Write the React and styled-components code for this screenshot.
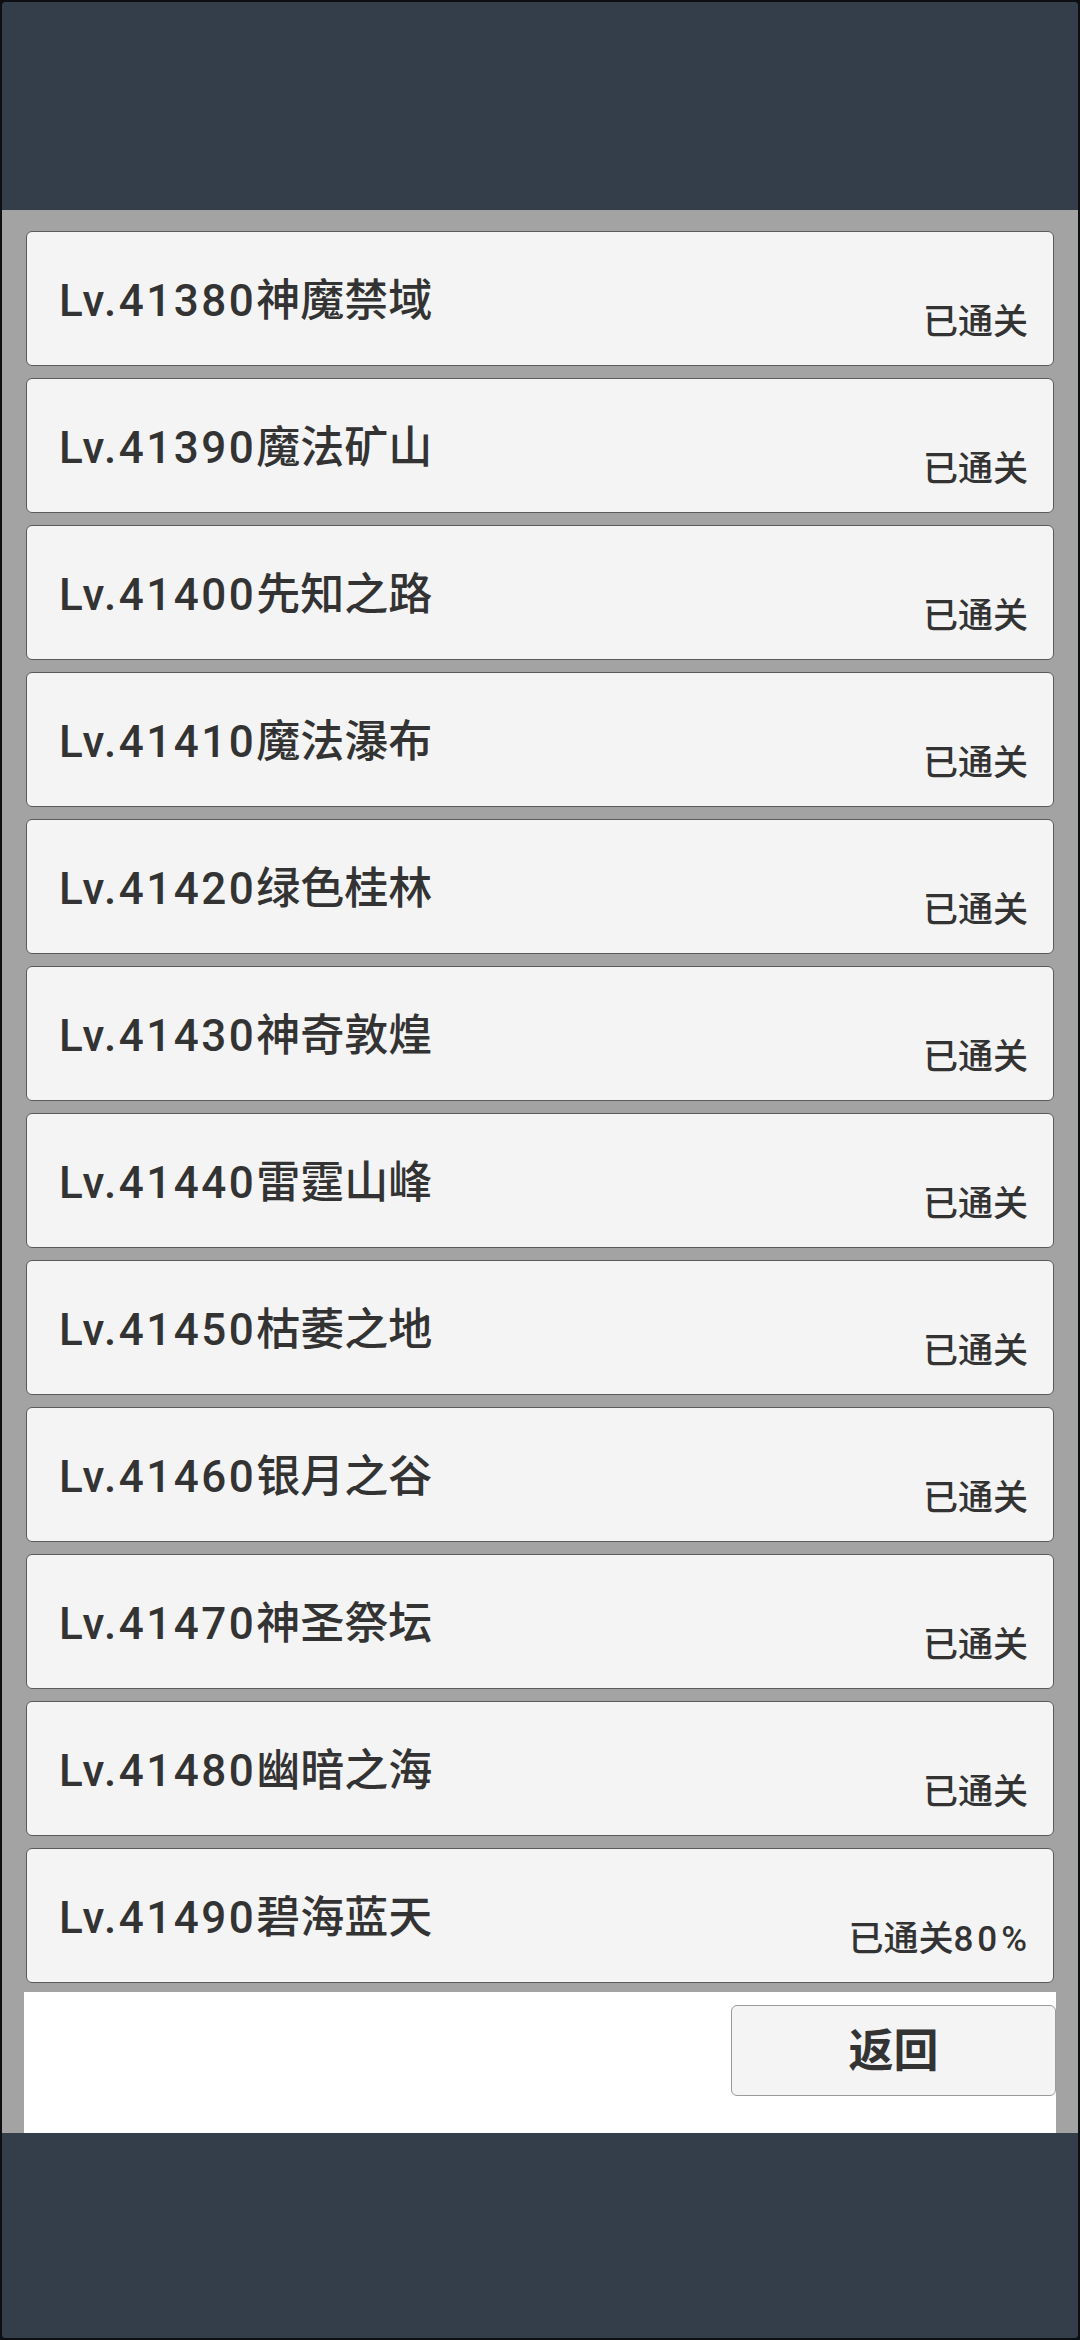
import styled, { createGlobalStyle } from 'styled-components'

const GlobalStyle = createGlobalStyle`
  html, body {
    margin: 0;
    padding: 0;
    background: #0e0f12;
  }
  * {
    box-sizing: border-box;
  }
`

const Screen = styled.div`
  width: 1080px;
  height: 2340px;
  display: flex;
  flex-direction: column;
  border: 2px solid #0e0f12;
  border-radius: 6px;
  overflow: hidden;
  background: #343d4a;
  font-family: Roboto, "Noto Sans CJK SC", sans-serif;
  color: #333333;
`

const TopBar = styled.div`
  height: 208px;
  flex-shrink: 0;
  background: #343d4a;
`

const Panel = styled.div`
  background: #a3a3a3;
  padding: 21px 24px 0 24px;
  display: flex;
  flex-direction: column;
`

const LevelList = styled.div`
  display: flex;
  flex-direction: column;
  gap: 12px;
`

const LevelCard = styled.div`
  height: 135px;
  display: flex;
  justify-content: space-between;
  background: #f4f4f4;
  border: 1px solid #5a5a5a;
  border-radius: 6px;
  padding: 0 25px 25px 32px;
`

const LevelName = styled.div`
  align-self: center;
  margin-top: 30px;
  font-size: 44px;
  font-weight: 500;
  line-height: 1;
  white-space: nowrap;
`

const LevelCode = styled.span`
  letter-spacing: 2.5px;
`

const LevelStatus = styled.div`
  align-self: flex-end;
  font-size: 35px;
  font-weight: 500;
  line-height: 1;
  white-space: nowrap;
`

const Progress = styled.span`
  letter-spacing: 4px;
  margin-right: -3px;
`

const Footer = styled.div`
  height: 141px;
  margin: 9px -2px 0 -2px;
  background: #ffffff;
  display: flex;
  justify-content: flex-end;
  align-items: flex-start;
  padding-top: 13px;
`

const BackButton = styled.button`
  width: 325px;
  height: 91px;
  background: #f4f4f4;
  border: 1px solid #9a9a9a;
  border-radius: 6px;
  font-family: Roboto, "Noto Sans CJK SC", sans-serif;
  font-size: 45px;
  font-weight: 700;
  color: #333333;
  padding: 2px 0 0 0;
  line-height: 1;
`

const BottomBar = styled.div`
  flex: 1;
  background: #343d4a;
`

const levels = [
  { level: 41380, name: '神魔禁域' },
  { level: 41390, name: '魔法矿山' },
  { level: 41400, name: '先知之路' },
  { level: 41410, name: '魔法瀑布' },
  { level: 41420, name: '绿色桂林' },
  { level: 41430, name: '神奇敦煌' },
  { level: 41440, name: '雷霆山峰' },
  { level: 41450, name: '枯萎之地' },
  { level: 41460, name: '银月之谷' },
  { level: 41470, name: '神圣祭坛' },
  { level: 41480, name: '幽暗之海' },
  { level: 41490, name: '碧海蓝天', progress: 80 },
]

function App() {
  return <>
    <GlobalStyle />
    <Screen>
      <TopBar />
      <Panel>
        <LevelList>
          {levels.map((item) => (
            <LevelCard key={item.level}>
              <LevelName>
                <LevelCode>Lv.{item.level}</LevelCode>{item.name}
              </LevelName>
              <LevelStatus>
                已通关{item.progress && <Progress>{item.progress}%</Progress>}
              </LevelStatus>
            </LevelCard>
          ))}
        </LevelList>
        <Footer>
          <BackButton>返回</BackButton>
        </Footer>
      </Panel>
      <BottomBar />
    </Screen>
  </>
}

export default App
